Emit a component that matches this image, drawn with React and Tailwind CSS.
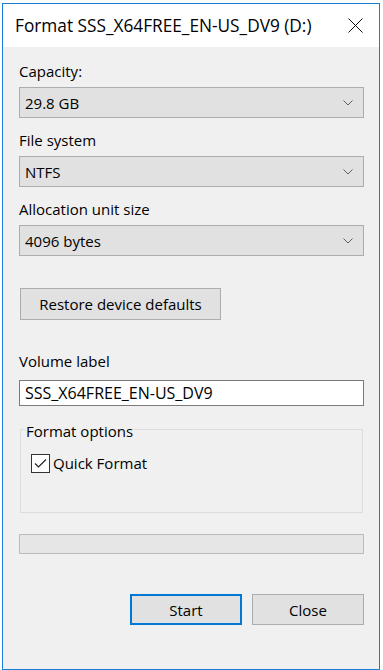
import React from "react";

const font = { fontFamily: '"Open Sans", "Liberation Sans", sans-serif' };

function Chevron() {
  return (
    <svg width="10" height="6" viewBox="0 0 10 6" className="block">
      <path d="M0.5 0.5 L5 5 L9.5 0.5" fill="none" stroke="#606060" strokeWidth="1" />
    </svg>
  );
}

function Combo({ value }) {
  return (
    <div className="mt-[6px] h-[31px] border border-[#adadad] bg-[#e1e1e1] flex items-center justify-between pl-[5px] pr-[10px]">
      <span className="text-[15px] leading-[20px] text-black">{value}</span>
      <Chevron />
    </div>
  );
}

function Label({ children, className = "" }) {
  return <div className={"h-[20px] text-[15px] leading-[20px] text-black " + className}>{children}</div>;
}

export default function App() {
  return (
    <div className="w-[383px] h-[670px] bg-white pl-[2px] pt-[3px]" style={font}>
      <div className="w-[378px] h-[667px] border border-[#1a7fd4] flex flex-col">
        <div className="h-[43px] bg-white flex items-center justify-between pl-[12px] pr-[16px]">
          <span className="text-[17.25px] leading-[22px] text-black">Format SSS_X64FREE_EN-US_DV9 (D:)</span>
          <svg width="15" height="15" viewBox="0 0 15 15" className="block">
            <path d="M0.5 0.5 L14.5 14.5 M14.5 0.5 L0.5 14.5" stroke="#111" strokeWidth="1" fill="none" />
          </svg>
        </div>
        <div className="flex-1 bg-[#f0f0f0] pl-[16px] pr-[15px] pt-[14px] flex flex-col">
          <Label>Capacity:</Label>
          <Combo value="29.8 GB" />
          <Label className="mt-[12px]">File system</Label>
          <Combo value="NTFS" />
          <Label className="mt-[12px]">Allocation unit size</Label>
          <Combo value="4096 bytes" />

          <button className="mt-[32px] ml-[1px] w-[201px] h-[32px] border border-[#adadad] bg-[#e1e1e1] text-[15px] leading-[20px] text-black flex items-center justify-center">
            Restore device defaults
          </button>

          <Label className="mt-[31px]">Volume label</Label>
          <div className="mt-[9px] h-[26px] border border-[#7a7a7a] bg-white flex items-center pl-[5px]">
            <span className="text-[16px] leading-[20px] text-black">SSS_X64FREE_EN-US_DV9</span>
          </div>

          <fieldset className="mt-[11px] ml-[1px] w-[343px] h-[96px] border border-[#dcdcdc] pl-[4px]">
            <legend className="pt-[4px] px-[1px] text-[15px] leading-[20px] text-black">Format options</legend>
            <div className="mt-[12px] ml-[6px] flex items-center">
              <div className="w-[19px] h-[19px] border border-[#333333] bg-white flex items-center justify-center">
                <svg width="13" height="11" viewBox="0 0 13 11" className="block">
                  <path d="M1 5.5 L4.5 9 L12 1.5" fill="none" stroke="#222" strokeWidth="1.2" />
                </svg>
              </div>
              <span className="ml-[3px] text-[15px] leading-[20px] text-black">Quick Format</span>
            </div>
          </fieldset>

          <div className="mt-[21px] h-[20px] border border-[#bcbcbc] bg-[#e6e6e6]" />

          <div className="mt-[40px] flex justify-end gap-[10px]">
            <button className="w-[112px] h-[31px] border-2 border-[#0078d7] bg-[#e1e1e1] text-[15px] leading-[20px] text-black flex items-center justify-center">
              Start
            </button>
            <button className="w-[112px] h-[31px] border border-[#adadad] bg-[#e1e1e1] text-[15px] leading-[20px] text-black flex items-center justify-center">
              Close
            </button>
          </div>
        </div>
      </div>
    </div>
  );
}
